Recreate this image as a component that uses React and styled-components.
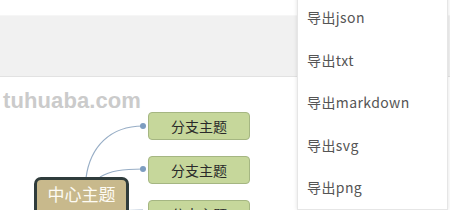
import React from "react";
import styled, { createGlobalStyle } from "styled-components";

const Global = createGlobalStyle`
  html, body { margin: 0; padding: 0; background: #fff; }
  body { font-family: "Noto Sans CJK SC", "Noto Sans", sans-serif; }
`;

const Page = styled.div`
  position: relative;
  width: 450px;
  height: 210px;
  overflow: hidden;
  display: flex;
  flex-direction: column;
  background: #fff;
`;

const TopStrip = styled.div`
  height: 15px;
  background: #fff;
  flex: none;
`;

const Toolbar = styled.div`
  height: 60px;
  background: #f1f1f1;
  border-bottom: 1px solid #e2e2e2;
  border-top: 1px solid #f6f6f6;
  flex: none;
`;

const Canvas = styled.div`
  position: relative;
  flex: 1;
  background: #fff;
`;

const Watermark = styled.div`
  position: absolute;
  left: 3px;
  top: 11px;
  font-family: "Liberation Sans", Arial, sans-serif;
  font-weight: 700;
  font-size: 22px;
  line-height: 26px;
  color: #cbcbcb;
  letter-spacing: 0.1px;
`;

const Lines = styled.svg`
  position: absolute;
  left: 0;
  top: 0;
`;

const Branch = styled.div`
  position: absolute;
  left: 148px;
  top: ${(p) => p.$top}px;
  width: 102px;
  height: 28px;
  box-sizing: border-box;
  background: #c6d79b;
  border: 1px solid #a5b682;
  border-radius: 4px;
  display: flex;
  align-items: center;
  justify-content: center;
  font-size: 14px;
  color: #2a2a2a;
`;

const Center = styled.div`
  position: absolute;
  left: 34px;
  top: 100px;
  width: 95px;
  height: 40px;
  box-sizing: border-box;
  background: #c8b98c;
  border: 3px solid #2f3c3c;
  border-radius: 7px;
  display: flex;
  align-items: flex-start;
  padding-top: 1px;
  justify-content: center;
  font-size: 17px;
  color: #fdfbf4;
`;

const Menu = styled.div`
  position: absolute;
  left: 297px;
  top: -5px;
  width: 149px;
  background: #fff;
  border: 1px solid #e6e6e6;
  box-shadow: 0 0 4px rgba(0, 0, 0, 0.12);
  display: flex;
  flex-direction: column;
`;

const MenuItem = styled.div`
  height: 42.5px;
  padding-left: 9px;
  display: flex;
  align-items: center;
  font-size: 14px;
  letter-spacing: 0.4px;
  color: #555;
`;

const items = ["导出json", "导出txt", "导出markdown", "导出svg", "导出png"];

export default function App() {
  return (
    <>
      <Global />
      <Page>
        <TopStrip />
        <Toolbar />
        <Canvas>
          <Watermark>tuhuaba.com</Watermark>
          <Lines width="260" height="140" viewBox="0 0 260 140">
            <path d="M86 101 C 90 70, 110 49, 143 49" fill="none" stroke="#98aec6" strokeWidth="1.2" />
            <path d="M100 100 C 110 94, 122 92, 143 92" fill="none" stroke="#98aec6" strokeWidth="1.2" />
            <path d="M100 140 C 104 136, 120 133, 143 133" fill="none" stroke="#98aec6" strokeWidth="1.2" />
            <circle cx="143" cy="49" r="3" fill="#7d9dc0" />
            <circle cx="143" cy="92" r="3" fill="#7d9dc0" />
          </Lines>
          <Branch $top={35}>分支主题</Branch>
          <Branch $top={79}>分支主题</Branch>
          <Branch $top={123}>分支主题</Branch>
          <Center>中心主题</Center>
        </Canvas>
        <Menu>
          {items.map((t) => (
            <MenuItem key={t}>{t}</MenuItem>
          ))}
        </Menu>
      </Page>
    </>
  );
}
